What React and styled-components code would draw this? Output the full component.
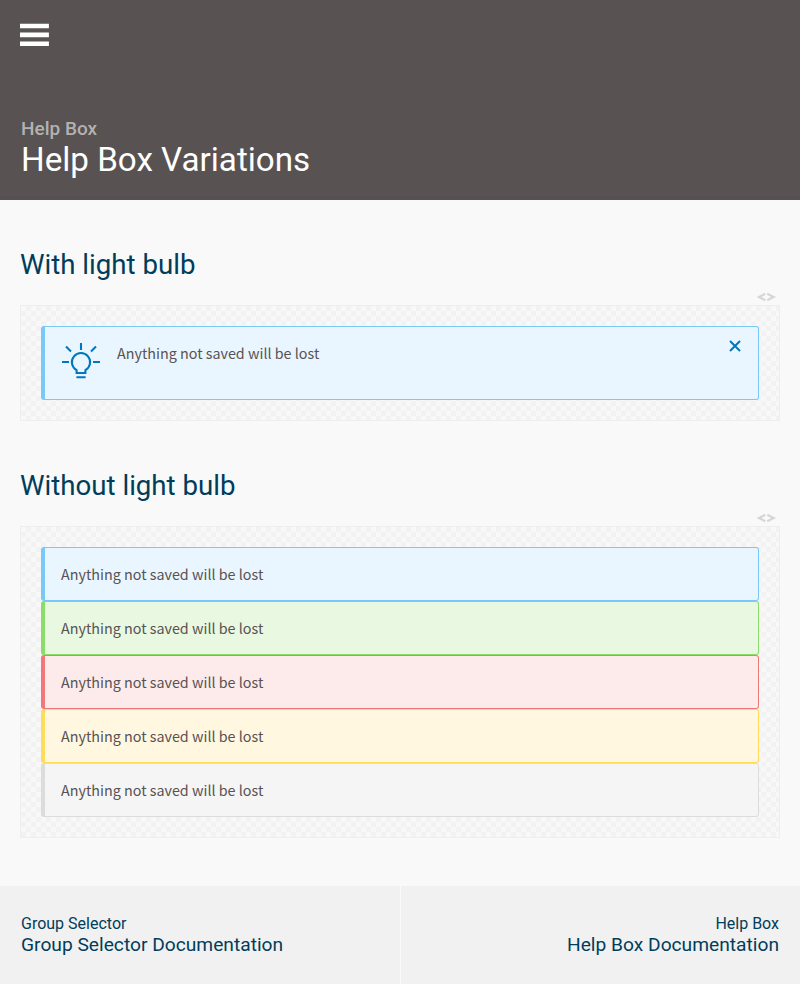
import React from "react";
import styled, { createGlobalStyle } from "styled-components";

const GlobalStyle = createGlobalStyle`
  * { box-sizing: border-box; }
  body { margin: 0; background: #f9f9f9; font-family: Roboto, sans-serif; color: #585252; }
  h1, h2, p { margin: 0; font-weight: 400; }
`;

const Header = styled.header`
  height: 200px;
  padding: 23px 20px 0;
  background: #585252;
  border-bottom: 4px solid #564f53;
  display: flex;
  flex-direction: column;
`;

const MenuButton = styled.button`
  width: 29px;
  height: 24px;
  padding: 0;
  border: 0;
  background: none;
  display: block;
  svg { display: block; }
`;

const Category = styled.p`
  && { font-weight: 500; }
  margin: 70px 0 0 1px;
  font-size: 19px;
  line-height: 24px;
  color: #b4b1b1;
`;

const Title = styled.h1`
  margin-left: 1px;
  font-size: 33.18px;
  line-height: 38px;
  color: #fff;
`;

const Main = styled.main`
  height: 686px;
  padding: 44px 20px 0;
`;

const Section = styled.section`
  margin-bottom: 44px;
`;

const Heading = styled.h2`
  font-size: 27.65px;
  line-height: 42px;
  color: #003d5b;
`;

const CodeRow = styled.div`
  height: 19px;
  padding: 6px 4px 0 0;
  display: flex;
  justify-content: flex-end;
  svg { display: block; }
`;

const Example = styled.div`
  padding: 20px;
  border: 1px solid #eee;
  background: repeating-conic-gradient(#f2f2f2 0 25%, #f8f8f8 0 50%) 0 0 / 10px 10px;
`;

const tones = {
  blue: ["#78c8fa", "#e9f6ff"],
  green: ["#8cdc69", "#e8f8e1"],
  red: ["#f07878", "#fdebeb"],
  yellow: ["#ffdc5a", "#fff7e0"],
  gray: ["#dcdcdc", "#f5f5f5"],
};

const HelpBox = styled.div`
  height: ${(p) => (p.$tall ? 74 : 54)}px;
  padding: 15px 16px;
  display: flex;
  align-items: flex-start;
  border: 1px solid ${(p) => tones[p.$tone][0]};
  border-left-width: 4px;
  border-radius: 3px;
  background: ${(p) => tones[p.$tone][1]};
`;

const Message = styled.p`
  flex: 1;
  margin-top: -1px;
  font-family: "Noto Sans CJK SC", sans-serif;
  font-size: 14.33px;
  line-height: 24px;
  color: #585252;
`;

const Bulb = styled.svg`
  width: 40px;
  height: 40px;
  margin-right: 16px;
`;

const Close = styled.button`
  padding: 0;
  border: 0;
  margin: -2px -1px 0 0;
  background: none;
  display: block;
  svg { display: block; }
`;

const Footer = styled.footer`
  height: 98px;
  display: grid;
  grid-template-columns: 400px 1fr;
`;

const FooterLink = styled.div`
  padding: 28px 21px 0;
  background: #f1f1f1;
  color: #003d5b;
  text-align: ${(p) => (p.$end ? "right" : "left")};
  border-left: ${(p) => (p.$end ? "1px solid #fbfbfb" : "0")};
`;

const FooterCategory = styled.p`
  font-size: 16px;
  line-height: 20px;
`;

const FooterTitle = styled.p`
  font-size: 19.2px;
  line-height: 22px;
`;

const text = "Anything not saved will be lost";

function SourceToggle() {
  return (
    <CodeRow>
      <svg width="19" height="12" viewBox="0 0 19 12" fill="none" stroke="#d6d6d6" strokeWidth="2.2">
        <path d="M8.3 1.8 2 5 8.3 8.2M10.3 1.8 16.6 5 10.3 8.2" />
      </svg>
    </CodeRow>
  );
}

export default function App() {
  return (
    <>
      <GlobalStyle />
      <Header>
        <MenuButton aria-label="Menu">
          <svg width="29" height="24" fill="#fff">
            <path d="M0 .7h28.9v4.6H0zM0 9.6h28.9v4.7H0zM0 18.4h28.9v4.6H0z" />
          </svg>
        </MenuButton>
        <Category>Help Box</Category>
        <Title>Help Box Variations</Title>
      </Header>
      <Main>
        <Section>
          <Heading>With light bulb</Heading>
          <SourceToggle />
          <Example>
            <HelpBox $tone="blue" $tall>
              <Bulb viewBox="0 0 40 40" fill="none" stroke="#0078be" strokeWidth="2.1">
                <path d="M20 1v7M5 4.6l5 5M35 4.6l-5 5M1 20h7M32 20h7M15.4 35.3h9.2M15.6 31v-2.9a9.1 9.1 0 1 1 8.8 0v2.9z" />
              </Bulb>
              <Message>{text}</Message>
              <Close aria-label="Close">
                <svg width="16" height="12" viewBox="0 0 16 12" stroke="#0078be" strokeWidth="2">
                  <path d="M3 1l10 10M13 1L3 11" />
                </svg>
              </Close>
            </HelpBox>
          </Example>
        </Section>
        <Section>
          <Heading>Without light bulb</Heading>
          <SourceToggle />
          <Example>
            {Object.keys(tones).map((tone) => (
              <HelpBox key={tone} $tone={tone}>
                <Message>{text}</Message>
              </HelpBox>
            ))}
          </Example>
        </Section>
      </Main>
      <Footer>
        <FooterLink>
          <FooterCategory>Group Selector</FooterCategory>
          <FooterTitle>Group Selector Documentation</FooterTitle>
        </FooterLink>
        <FooterLink $end>
          <FooterCategory>Help Box</FooterCategory>
          <FooterTitle>Help Box Documentation</FooterTitle>
        </FooterLink>
      </Footer>
    </>
  );
}
